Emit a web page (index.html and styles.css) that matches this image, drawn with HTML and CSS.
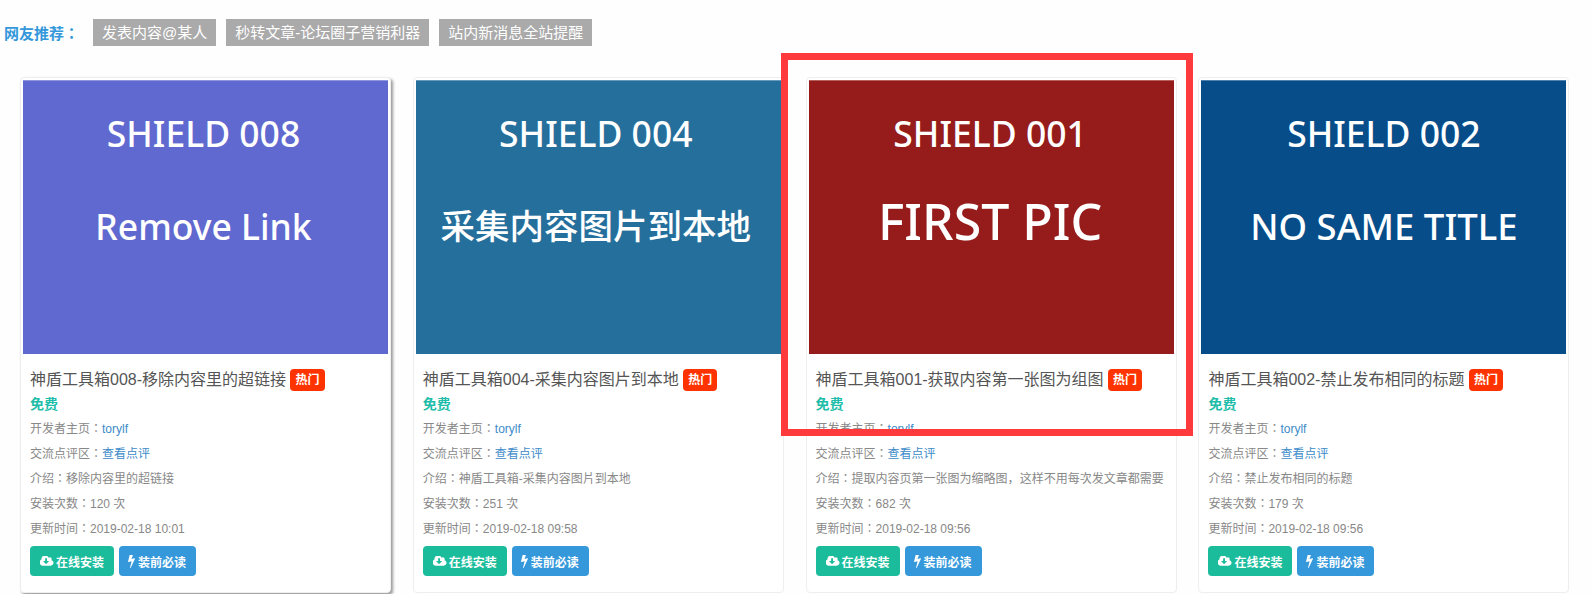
FILE: index.html
```html
<!DOCTYPE html>
<html lang="zh-CN">
<head>
    <meta charset="UTF-8">
    <title>神盾工具箱</title>
    <link rel="stylesheet" href="styles.css">
</head>
<body>
    <svg class="sprites" width="0" height="0">
        <symbol id="i-cloud" viewBox="0 256 1920 1280"><path d="M1216 928q0-14-9-23t-23-9h-224v-352q0-13-9.500-22.500t-22.500-9.500h-192q-13 0-22.500 9.500t-9.500 22.500v352h-224q-13 0-22.500 9.500t-9.500 22.500q0 14 9 23l352 352q9 9 23 9t23-9l351-351q10-12 10-24zm640 224q0 159-112.500 271.500t-271.500 112.500h-1088q-185 0-316.500-131.500t-131.500-316.500q0-130 70-240t188-165q-2-30-2-43 0-212 150-362t362-150q156 0 285.500 87t188.500 231q71-62 166-62 106 0 181 75t75 181q0 76-41 138 130 31 213.500 135.500t83.500 238.500z"/></symbol>
        <symbol id="i-bolt" viewBox="449 128 891 1664"><path d="M1333 566q18 20 7 44l-540 1157q-13 25-42 25-4 0-14-2-17-5-25.500-19t-4.500-30l197-808-406 101q-4 1-12 1-18 0-31-11-18-15-13-39l201-825q4-14 16-23t28-9h328q19 0 32 12.500t13 29.500q0 8-5 18l-171 463 396-98q8-2 12-2 19 0 34 15z"/></symbol>
    </svg>

    <div class="recommend">
        <span class="recommend-label">网友推荐：</span>
        <a class="tag" href="#">发表内容@某人</a>
        <a class="tag" href="#">秒转文章-论坛圈子营销利器</a>
        <a class="tag" href="#">站内新消息全站提醒</a>
    </div>

    <div class="cards">
        <div class="card card-hover">
            <div class="cover cover-purple">
                <div class="cover-title">SHIELD 008</div>
                <div class="cover-sub">Remove Link</div>
            </div>
            <div class="caption">
                <h3 class="title">神盾工具箱008-移除内容里的超链接 <span class="hot">热门</span></h3>
                <p class="price">免费</p>
                <p class="row">开发者主页：<a href="#">torylf</a></p>
                <p class="row">交流点评区：<a href="#">查看点评</a></p>
                <p class="row">介绍：移除内容里的超链接</p>
                <p class="row">安装次数：120 次</p>
                <p class="row">更新时间：2019-02-18 10:01</p>
                <div class="actions">
                    <a class="btn btn-green" href="#"><svg class="icon icon-cloud"><use href="#i-cloud"/></svg>在线安装</a>
                    <a class="btn btn-blue" href="#"><svg class="icon icon-bolt"><use href="#i-bolt"/></svg>装前必读</a>
                </div>
            </div>
        </div>

        <div class="card">
            <div class="cover cover-teal">
                <div class="cover-title">SHIELD 004</div>
                <div class="cover-sub cover-sub-cjk">采集内容图片到本地</div>
            </div>
            <div class="caption">
                <h3 class="title">神盾工具箱004-采集内容图片到本地 <span class="hot">热门</span></h3>
                <p class="price">免费</p>
                <p class="row">开发者主页：<a href="#">torylf</a></p>
                <p class="row">交流点评区：<a href="#">查看点评</a></p>
                <p class="row">介绍：神盾工具箱-采集内容图片到本地</p>
                <p class="row">安装次数：251 次</p>
                <p class="row">更新时间：2019-02-18 09:58</p>
                <div class="actions">
                    <a class="btn btn-green" href="#"><svg class="icon icon-cloud"><use href="#i-cloud"/></svg>在线安装</a>
                    <a class="btn btn-blue" href="#"><svg class="icon icon-bolt"><use href="#i-bolt"/></svg>装前必读</a>
                </div>
            </div>
        </div>

        <div class="card">
            <div class="cover cover-red">
                <div class="cover-title">SHIELD 001</div>
                <div class="cover-sub cover-sub-big">FIRST PIC</div>
            </div>
            <div class="caption">
                <h3 class="title">神盾工具箱001-获取内容第一张图为组图 <span class="hot">热门</span></h3>
                <p class="price">免费</p>
                <p class="row">开发者主页：<a href="#">torylf</a></p>
                <p class="row">交流点评区：<a href="#">查看点评</a></p>
                <p class="row">介绍：提取内容页第一张图为缩略图<span class="comma">，</span>这样不用每次发文章都需要</p>
                <p class="row">安装次数：682 次</p>
                <p class="row">更新时间：2019-02-18 09:56</p>
                <div class="actions">
                    <a class="btn btn-green" href="#"><svg class="icon icon-cloud"><use href="#i-cloud"/></svg>在线安装</a>
                    <a class="btn btn-blue" href="#"><svg class="icon icon-bolt"><use href="#i-bolt"/></svg>装前必读</a>
                </div>
            </div>
            <div class="highlight"></div>
        </div>

        <div class="card">
            <div class="cover cover-navy">
                <div class="cover-title">SHIELD 002</div>
                <div class="cover-sub cover-sub-wide">NO SAME TITLE</div>
            </div>
            <div class="caption">
                <h3 class="title">神盾工具箱002-禁止发布相同的标题 <span class="hot">热门</span></h3>
                <p class="price">免费</p>
                <p class="row">开发者主页：<a href="#">torylf</a></p>
                <p class="row">交流点评区：<a href="#">查看点评</a></p>
                <p class="row">介绍：禁止发布相同的标题</p>
                <p class="row">安装次数：179 次</p>
                <p class="row">更新时间：2019-02-18 09:56</p>
                <div class="actions">
                    <a class="btn btn-green" href="#"><svg class="icon icon-cloud"><use href="#i-cloud"/></svg>在线安装</a>
                    <a class="btn btn-blue" href="#"><svg class="icon icon-bolt"><use href="#i-bolt"/></svg>装前必读</a>
                </div>
            </div>
        </div>
    </div>
</body>
</html>
```

FILE: styles.css
```css
html, body {
    height: 594px;
    overflow: hidden;
}
body {
    margin: 0;
    background: #fefefe;
    color: #333;
    font-family: "Liberation Sans", "Noto Sans CJK SC", sans-serif;
    font-size: 12px;
}
a {
    text-decoration: none;
}
.sprites {
    position: absolute;
}

.recommend {
    display: flex;
    align-items: center;
    height: 27px;
    padding: 19px 0 0 4px;
}
.recommend-label {
    width: 89px;
    color: #3498db;
    font-family: "Liberation Sans", "Noto Sans CJK TC", sans-serif;
    font-size: 15px;
    font-weight: bold;
    font-feature-settings: "locl" 0;
}
.tag {
    margin-right: 10px;
    padding: 0 9px;
    background: #aaa;
    color: #fff;
    font-size: 15px;
    line-height: 27px;
}

.cards {
    display: grid;
    grid-template-columns: repeat(4, 371px);
    gap: 21.8px;
    margin: 31px 0 0 20px;
}
.card {
    position: relative;
    box-sizing: border-box;
    height: 516px;
    padding: 2px;
    background: #fff;
    border: 1px solid #eee;
    border-radius: 4px;
}
.card-hover {
    box-shadow: 2px 2px 3px #999;
}

.cover {
    display: flex;
    flex-direction: column;
    align-items: center;
    box-sizing: border-box;
    height: 274px;
    padding-top: 28px;
    border-top: 1px solid rgba(255, 255, 255, 0.3);
    color: #fff;
    font-family: "Noto Sans", "Noto Sans CJK SC", sans-serif;
}
.cover-purple { background: #5f69cf; padding-right: 4px; }
.cover-teal { background: #256f9c; padding-right: 5px; }
.cover-red { background: #961c1b; padding-right: 2px; }
.cover-navy { background: #064d8a; }
.cover-title {
    font-size: 35.5px;
    font-weight: 500;
    line-height: 48px;
}
.cover-sub {
    margin-top: 45px;
    font-size: 35.5px;
    font-weight: 500;
    line-height: 48px;
}
.cover-sub-cjk {
    font-size: 34.5px;
}
.cover-sub-wide {
    font-size: 36.5px;
}
.cover-sub-big {
    margin-top: 40px;
    font-size: 50px;
}

.caption {
    padding: 13px 7px 0;
}
.title {
    margin: 0;
    color: #555;
    font-size: 16px;
    font-weight: normal;
    line-height: 25px;
    white-space: nowrap;
}
.hot {
    display: inline-block;
    padding: 0 5px;
    background: #f30;
    border-radius: 4px;
    color: #fff;
    font-size: 12px;
    font-weight: bold;
    line-height: 22px;
    vertical-align: 1px;
}
.price {
    margin: 0;
    color: #1dbdaa;
    font-size: 14px;
    font-weight: bold;
    line-height: 25px;
}
.row {
    margin: 0;
    color: #888;
    font-family: "Liberation Sans", "Noto Sans CJK TC", sans-serif;
    font-feature-settings: "locl" 0;
    line-height: 25px;
    white-space: nowrap;
}
.row a {
    color: #3d8bc9;
}
.comma {
    font-family: "Liberation Sans", "Noto Sans CJK SC", sans-serif;
}

.actions {
    display: flex;
    gap: 5px;
    margin-top: 4px;
}
.btn {
    display: flex;
    align-items: center;
    height: 30px;
    padding: 0 10px 0 9px;
    border-radius: 4px;
    color: #fff;
    font-size: 12px;
    font-weight: bold;
}
.btn-green { background: #1abc9c; padding-left: 10px; }
.btn-blue { background: #3498db; }
.icon {
    fill: #fff;
}
.icon-cloud {
    width: 14px;
    height: 10px;
    margin-right: 2px;
}
.icon-bolt {
    width: 7px;
    height: 13px;
    margin-right: 3px;
}

/* red frame drawn over the screenshot */
.highlight {
    position: absolute;
    left: -26px;
    top: -25px;
    width: 398px;
    height: 369px;
    border: 7px solid #ff3a3c;
    pointer-events: none;
}
```
